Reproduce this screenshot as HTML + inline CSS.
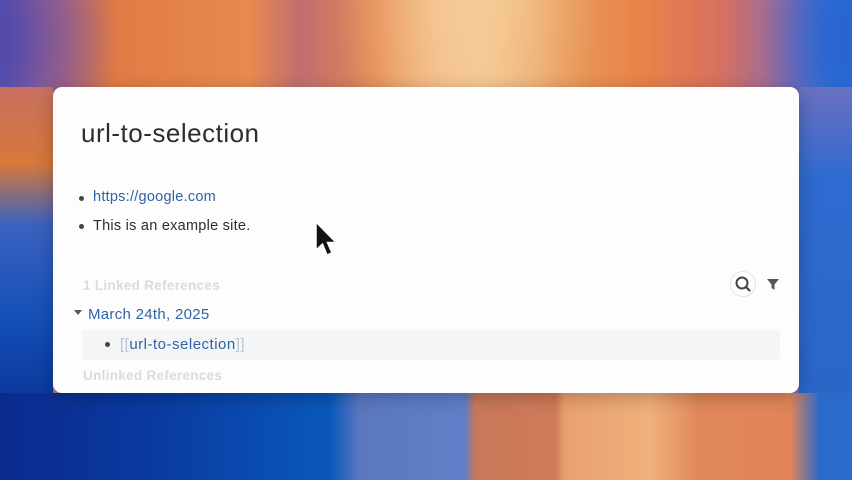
<!DOCTYPE html>
<html><head><meta charset="utf-8"><style>
html,body{margin:0;padding:0;width:852px;height:480px;overflow:hidden}
body{position:relative;font-family:"Liberation Sans",sans-serif;
background:
radial-gradient(ellipse 130px 220px at 470px 0px, rgba(245,205,150,.9), rgba(245,205,150,0) 100%),
radial-gradient(ellipse 120px 160px at 0px 40px, rgba(80,70,170,.9), rgba(80,70,170,0) 100%),
radial-gradient(ellipse 90px 160px at 852px 40px, rgba(40,100,210,1), rgba(40,100,210,0) 100%),
linear-gradient(90deg,#5a5ab0 0px,#b06a8a 40px,#e07a45 110px,#e88a50 250px,#c06e70 300px,#e68a52 380px,#f2b585 440px,#f5c493 480px,#e8995c 560px,#e88448 640px,#d87060 720px,#8a6aa8 790px,#2f6fd0 830px,#2a6ad0 852px);}
.bot{position:absolute;left:0;top:393px;width:852px;height:87px;
background:linear-gradient(90deg,#0b2a8e 0px,#0a3aa0 150px,#0a58bb 330px,#5b78c0 360px,#5f80c8 465px,#c8785a 475px,#d07a58 555px,#e9a070 565px,#f0b07c 650px,#e0885a 700px,#e2855a 790px,#2a6ac8 820px,#2a6ad0 852px)}
.lside{position:absolute;left:0;top:87px;width:53px;height:306px;background:linear-gradient(180deg,#c87060 0%,#d8783a 25%,#3a62c0 45%,#1550b8 75%,#0b3a9e)}
.rside{position:absolute;left:799px;top:87px;width:53px;height:306px;background:linear-gradient(180deg,#6a70c0,#2f6ad0 30%,#2a66c8)}
.card{position:absolute;left:53px;top:87px;width:746px;height:306px;background:#fdfdfe;border-radius:9px;box-shadow:0 4px 18px rgba(0,0,0,.25);overflow:hidden}
.title{position:absolute;left:28px;top:31px;font-size:26px;letter-spacing:0.5px;color:#2b2d31}
.li{position:absolute;left:40px;font-size:14.5px;letter-spacing:0.25px;color:#2b2d31}
.dot{position:absolute;width:5px;height:5px;border-radius:50%;background:#444}
.blue{color:#2e63a8}
.faint{position:absolute;left:30px;font-size:13.5px;letter-spacing:0.3px;font-weight:bold;color:#d9dbde}
.ref{position:absolute;left:29px;top:243px;width:698px;height:30px;background:#f3f5f7;border-radius:3px}
</style></head><body>
<div class="lside"></div><div class="rside"></div><div class="bot"></div>
<div class="card">
<div class="title">url-to-selection</div>
<div class="dot" style="left:26px;top:109px"></div>
<div class="li blue" style="top:102px">https://google.com</div>
<div class="dot" style="left:26px;top:137px"></div>
<div class="li" style="top:131px">This is an example site.</div>
<div class="faint" style="top:191px">1 Linked References</div>
<div style="position:absolute;left:677px;top:184px;width:26px;height:26px;border:1px solid #e3e5e8;border-radius:50%;box-sizing:border-box">
<svg width="24" height="24" viewBox="0 0 24 24" style="position:absolute;left:0;top:0"><circle cx="11" cy="11" r="5.5" fill="none" stroke="#444" stroke-width="2"/><line x1="15" y1="15" x2="18.5" y2="18.5" stroke="#444" stroke-width="2.2" stroke-linecap="round"/></svg></div>
<svg style="position:absolute;left:713px;top:191px" width="14" height="14" viewBox="0 0 14 14"><path d="M1 1H13L8.5 6.5V12L5.5 10V6.5Z" fill="#555"/></svg>
<svg style="position:absolute;left:20px;top:222px" width="10" height="8" viewBox="0 0 10 8"><path d="M1 1H9L5 6Z" fill="#555"/></svg>
<div style="position:absolute;left:35px;top:219px;font-size:15px;letter-spacing:0.3px" class="blue">March 24th, 2025</div>
<div class="ref"></div>
<div class="dot" style="left:52px;top:255px"></div>
<div style="position:absolute;left:67px;top:249px;font-size:15px;letter-spacing:0.5px"><span style="color:#b7c3d3">[[</span><span class="blue">url-to-selection</span><span style="color:#b7c3d3">]]</span></div>
<div class="faint" style="top:281px">Unlinked References</div>
<svg style="position:absolute;left:261px;top:133px" width="26" height="40" viewBox="0 0 26 40"><path d="M2 2V30L8.5 24L13 35L18 33L13.5 22.5H22Z" fill="#111" stroke="#fff" stroke-width="1.5"/></svg>
</div>
</body></html>
